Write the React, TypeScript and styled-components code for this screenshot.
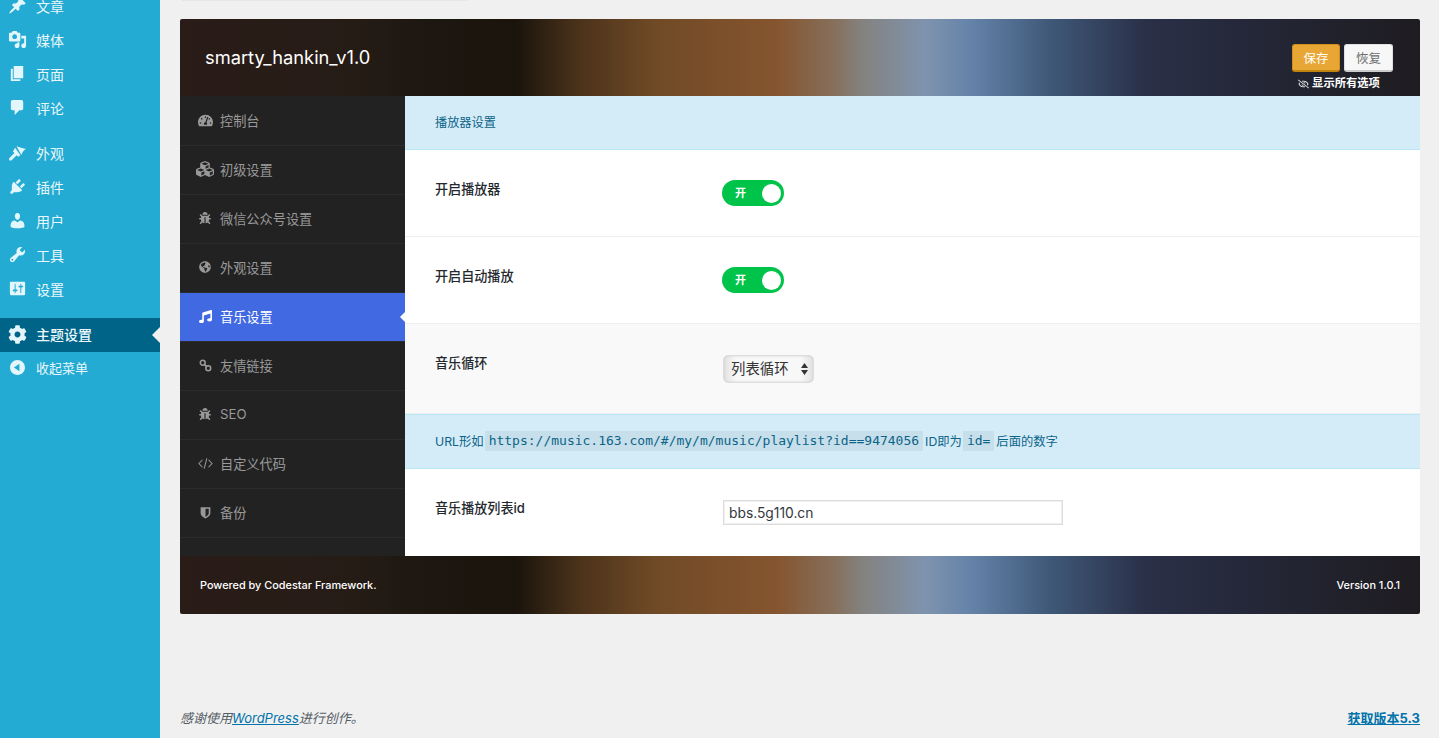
import React from 'react';
import styled, { createGlobalStyle } from 'styled-components';
import {
  FaBug,
  FaCog,
  FaCubes,
  FaGlobeAmericas,
  FaMusic,
  FaRegEyeSlash,
  FaTachometerAlt,
} from 'react-icons/fa';

const SANS = `"Inter", "Noto Sans CJK SC", sans-serif`;

const GlobalStyle = createGlobalStyle`
  html, body {
    margin: 0;
    height: 738px;
    overflow: hidden;
    background: #f0f0f0;
    font-family: ${SANS};
  }
  * { box-sizing: border-box; }
`;

const Page = styled.div`
  display: flex;
  width: 1439px;
  height: 738px;
  overflow: hidden;
`;

const AdminMenu = styled.nav`
  width: 160px;
  height: 738px;
  flex: none;
  background: #23abd3;
  overflow: hidden;
`;

const MenuList = styled.div`
  display: flex;
  flex-direction: column;
  margin-top: -11px;
`;

const MenuItem = styled.div<{ $active?: boolean; $gap?: number; $small?: boolean }>`
  position: relative;
  display: flex;
  align-items: center;
  gap: 9px;
  height: 34px;
  padding: 0 0 ${(p) => (p.$small ? 3 : p.$active ? 2 : 1)}px 8px;
  margin-top: ${(p) => p.$gap ?? 0}px;
  background: ${(p) => (p.$active ? '#006388' : 'transparent')};
  color: #e9f7fb;
  font-size: ${(p) => (p.$small ? 13 : 14)}px;
  font-weight: ${(p) => (p.$active ? 500 : 400)};
  svg {
    width: 19px;
    height: 19px;
    flex: none;
    fill: #e3f6fb;
  }
`;

const MenuArrow = styled.span`
  position: absolute;
  right: 0;
  top: 9px;
  border: 8px solid transparent;
  border-left: 0;
  border-right-color: #f0f0f0;
`;

const Main = styled.main`
  flex: 1;
  display: flex;
  flex-direction: column;
  padding: 0 19px 0 20px;
`;

const TopEdge = styled.div`
  width: 285px;
  height: 1px;
  margin: 0 0 18px 2px;
  background: #e6e6e6;
`;

const Panel = styled.section`
  display: flex;
  flex-direction: column;
  height: 595px;
  border-radius: 2px;
  overflow: hidden;
`;

const banner = `
  background: linear-gradient(
    90deg,
    #2a1c18 0,
    #261c16 170px,
    #1c1710 250px,
    #1a140c 335px,
    #4a321a 398px,
    #704a26 476px,
    #85552f 597px,
    #86705c 655px,
    #84827f 682px,
    #7f93ae 745px,
    #6583a9 790px,
    #3f5878 870px,
    #2a3048 965px,
    #25283a 1060px,
    #1e1c20 1240px
  );
`;

const PanelHeader = styled.header`
  ${banner}
  display: flex;
  align-items: flex-start;
  justify-content: space-between;
  height: 77px;
  flex: none;
  padding: 25px 27px 0 25px;
`;

const Title = styled.h1`
  margin: 2px 0 0;
  color: #fff;
  font-size: 18.3px;
  font-weight: 400;
  line-height: 22px;
`;

const HeaderActions = styled.div`
  display: flex;
  flex-direction: column;
  align-items: center;
`;

const ButtonRow = styled.div`
  display: flex;
  gap: 4px;
`;

const Button = styled.button<{ $primary?: boolean }>`
  width: ${(p) => (p.$primary ? 48 : 49)}px;
  height: 28px;
  padding: 0;
  border: 1px solid ${(p) => (p.$primary ? '#d08f18' : '#e0e0e0')};
  border-bottom: 2px solid ${(p) => (p.$primary ? '#c0840c' : '#cccccc')};
  border-radius: 3px;
  background: ${(p) => (p.$primary ? '#e8a735' : '#f7f7f7')};
  color: ${(p) => (p.$primary ? '#fff' : '#6e6e6e')};
  font-family: ${SANS};
  font-size: 12.5px;
`;

const ShowAll = styled.div`
  display: flex;
  align-items: center;
  gap: 3px;
  margin: 4px 7px 0 0;
  color: #fff;
  font-size: 11.3px;
  font-weight: 700;
  line-height: 15px;
  svg {
    width: 11px;
    height: 10px;
  }
`;

const PanelBody = styled.div`
  display: flex;
  flex: 1;
  min-height: 0;
`;

const SideNav = styled.nav`
  width: 225px;
  flex: none;
  padding-top: 1px;
  background: #222222;
`;

const NavItem = styled.div<{ $active?: boolean }>`
  position: relative;
  display: flex;
  align-items: center;
  height: 49px;
  padding: 0 0 2px 15px;
  border-bottom: 1px solid #2c2c2c;
  background: ${(p) => (p.$active ? '#4169e1' : 'transparent')};
  background-clip: padding-box;
  color: ${(p) => (p.$active ? '#fff' : '#999')};
  font-size: 13.2px;
`;

const NavIcon = styled.span<{ $size: number }>`
  display: flex;
  align-items: center;
  justify-content: center;
  width: 20px;
  margin-right: 5px;
  svg {
    width: ${(p) => p.$size}px;
    height: ${(p) => p.$size}px;
    fill: currentColor;
  }
`;

const NavArrow = styled.span`
  position: absolute;
  right: 0;
  top: 19px;
  border: 5px solid transparent;
  border-left: 0;
  border-right-color: #fff;
`;

const Content = styled.div`
  flex: 1;
  display: flex;
  flex-direction: column;
  background: #fff;
`;

const SectionTitle = styled.div`
  height: 54px;
  padding: 0 0 1px 30px;
  display: flex;
  align-items: center;
  border-bottom: 1px solid #b8e8f5;
  background: #d4ecf8;
  color: #0c6488;
  font-size: 12.2px;
`;

const Row = styled.div<{ $height: number; $muted?: boolean; $last?: boolean }>`
  display: flex;
  height: ${(p) => p.$height}px;
  padding: 30px 0 0 30px;
  border-bottom: ${(p) => (p.$last ? 'none' : '1px solid #eeeeee')};
  background: ${(p) => (p.$muted ? '#f9f9f9' : '#fff')};
`;

const Label = styled.label`
  width: 288px;
  flex: none;
  color: #23282d;
  font-size: 13.1px;
  font-weight: 500;
  line-height: 18px;
`;

const Toggle = styled.div`
  position: relative;
  width: 62px;
  height: 26px;
  margin-left: -1px;
  padding-left: 13px;
  border-radius: 13px;
  background: #00c44a;
  color: #fff;
  font-size: 11px;
  font-weight: 700;
  line-height: 26px;
`;

const Knob = styled.span`
  position: absolute;
  top: 4px;
  right: 3px;
  width: 19px;
  height: 19px;
  border-radius: 50%;
  background: #fff;
`;

const SelectBox = styled.div`
  position: relative;
  width: 91px;
  height: 28px;
  margin-top: 1px;
`;

const Select = styled.select`
  appearance: none;
  width: 100%;
  height: 100%;
  padding: 0 0 1px 7px;
  border: 1px solid #dddddd;
  border-radius: 5px;
  background: linear-gradient(90deg, #e2e2e2 0, #f8f8f8 14%, #f8f8f8 86%, #e2e2e2 100%);
  box-shadow: inset 0 0 2px #c4c4c4;
  color: #333;
  font-family: ${SANS};
  font-size: 14.4px;
`;

const SelectArrows = styled.svg`
  position: absolute;
  right: 6px;
  top: 8px;
  width: 7px;
  height: 12px;
  fill: #333;
  pointer-events: none;
`;

const Notice = styled.div`
  display: flex;
  align-items: center;
  height: 55px;
  padding: 0 0 2px 30px;
  border-top: 1px solid #b8e8f5;
  border-bottom: 1px solid #b8e8f5;
  background: #d4ecf8;
  color: #0c6488;
  font-size: 12.3px;
  white-space: pre;
`;

const Code = styled.code`
  margin: 0 2px 0 1px;
  padding: 2px 4px;
  background: #c6dfea;
  font-family: "DejaVu Sans Mono", monospace;
  font-size: 13px;
  line-height: 16px;
`;

const TextInput = styled.input`
  width: 340px;
  height: 25px;
  margin-top: 1px;
  padding: 0 5px;
  border: 1px solid #dddddd;
  box-shadow: inset 0 0 0 1px #f0f0f0;
  background: #fff;
  color: #32373c;
  font-family: ${SANS};
  font-size: 13.8px;
`;

const PanelFooter = styled.footer`
  ${banner}
  display: flex;
  align-items: center;
  justify-content: space-between;
  height: 58px;
  flex: none;
  padding: 0 20px;
  color: #fff;
  font-size: 10.9px;
  font-weight: 500;
`;

const WpFooter = styled.footer`
  display: flex;
  justify-content: space-between;
  margin-top: 95px;
  color: #555d66;
  font-size: 13px;
  line-height: 18px;
`;

const Thanks = styled.em`
  font-style: italic;
`;

const WpLink = styled.a<{ $bold?: boolean }>`
  color: #0073aa;
  text-decoration: underline;
  font-weight: ${(p) => (p.$bold ? 700 : 400)};
`;

const Dash = ({ d }: { d: string }) => (
  <svg viewBox="0 0 20 20">
    <path d={d} />
  </svg>
);

const ChainIcon = () => (
  <svg viewBox="0 0 16 16" style={{ fill: 'none' }}>
    <circle cx="4.6" cy="4.6" r="3" stroke="currentColor" strokeWidth="1.9" />
    <circle cx="11.4" cy="11.4" r="3" stroke="currentColor" strokeWidth="1.9" />
    <path d="M6 6l4 4" stroke="currentColor" strokeWidth="1.9" />
  </svg>
);

const CodeIcon = () => (
  <svg viewBox="0 0 16 16" style={{ fill: 'none' }}>
    <path d="M4.8 4L1 8l3.8 4M11.2 4L15 8l-3.8 4M9.4 2.5L6.6 13.5" stroke="currentColor" strokeWidth="1.1" />
  </svg>
);

const ShieldIcon = () => (
  <svg viewBox="0 0 16 16">
    <path
      fillRule="evenodd"
      d="M2 1.5h12v7.5c0 3-3 5-6 6.5C5 14 2 12 2 9zM8 3.5v10c2.2-1.2 4-2.8 4-4.5V3.5z"
    />
  </svg>
);

const menuTop: { label: string; d: string; gap?: number }[] = [
  {
    label: '文章',
    d: 'M10.44 3.02l1.82-1.82 6.36 6.35-1.83 1.82c-1.05-.68-2.48-.57-3.41.36l-.75.75c-.92.93-1.04 2.35-.35 3.41l-1.83 1.82-2.41-2.41-2.8 2.79c-.42.42-3.38 2.71-3.8 2.29s1.86-3.39 2.28-3.81l2.79-2.79L4.1 9.36l1.83-1.82c1.05.69 2.48.57 3.4-.36l.75-.75c.93-.92 1.05-2.35.36-3.41z',
  },
  {
    label: '媒体',
    d: 'M13 11V4c0-.55-.45-1-1-1h-1.67L9 1H5L3.67 3H2c-.55 0-1 .45-1 1v7c0 .55.45 1 1 1h10c.55 0 1-.45 1-1zM7 4.5c1.38 0 2.5 1.12 2.5 2.5S8.38 9.5 7 9.5 4.5 8.38 4.5 7 5.62 4.5 7 4.5zM14 6h5v10.5c0 1.38-1.12 2.5-2.5 2.5S14 17.88 14 16.5s1.12-2.5 2.5-2.5c.17 0 .34.02.5.05V9h-3V6zm-4 8.05V13h2v3.5c0 1.38-1.12 2.5-2.5 2.5S7 17.88 7 16.5 8.12 14 9.5 14c.17 0 .34.02.5.05z',
  },
  { label: '页面', d: 'M6 15V2h10v13H6zm-1 1h8v2H3V5h2v11z' },
  {
    label: '评论',
    d: 'M5 2h9c1.1 0 2 .9 2 2v7c0 1.1-.9 2-2 2h-2l-5 5v-5H5c-1.1 0-2-.9-2-2V4c0-1.1.9-2 2-2z',
  },
  {
    label: '外观',
    gap: 11,
    d: 'M9 3.5c3 1 6.5 2 10 2.7-2 .8-3.7 2.5-5 6.3zM7.5 5l5.5 8-2.3 1.5-1.6-1.6-5 5c-.8.8-2 .8-2.6.2s-.5-1.7.3-2.5l5-5-1.6-1.7z',
  },
  {
    label: '插件',
    d: 'M13.11 4.36L9.87 7.6 8 5.73l3.24-3.24c.35-.34 1.05-.2 1.56.32.52.51.66 1.21.31 1.55zm-8 1.77l.91-1.12 9.01 9.01-1.19.84c-.71.71-2.63 1.16-3.82 1.16H6.14L4.9 17.26c-.59.59-1.54.59-2.12 0-.59-.58-.59-1.53 0-2.12l1.24-1.24v-3.88c0-1.13.4-3.19 1.09-3.89zm7.26 3.97l3.24-3.24c.34-.35 1.04-.21 1.55.31.52.51.66 1.21.31 1.55l-3.24 3.25z',
  },
  {
    label: '用户',
    d: 'M10 9.25c-2.27 0-2.73-3.44-2.73-3.44C7 4.02 7.82 2 9.97 2c2.16 0 2.98 2.02 2.71 3.81 0 0-.41 3.44-2.68 3.44zm0 2.57L12.72 10c2.39 0 4.52 2.33 4.52 4.53v2.49s-3.65 1.13-7.24 1.13c-3.65 0-7.24-1.13-7.24-1.13v-2.49c0-2.25 1.94-4.48 4.47-4.48z',
  },
  {
    label: '工具',
    d: 'M16.68 9.77c-1.34 1.34-3.3 1.67-4.95.99l-5.41 6.52c-.99.99-2.59.99-3.58 0s-.99-2.59 0-3.57l6.52-5.42c-.68-1.65-.35-3.61.99-4.95 1.28-1.28 3.12-1.62 4.72-1.06l-2.89 2.89 2.82 2.82 2.86-2.87c.53 1.58.18 3.39-1.08 4.65zM3.81 16.21c.4.39 1.04.39 1.43 0 .4-.4.4-1.04 0-1.43-.39-.4-1.03-.4-1.43 0-.39.39-.39 1.03 0 1.43z',
  },
  {
    label: '设置',
    d: 'M18 16V4c0-.55-.45-1-1-1H3c-.55 0-1 .45-1 1v12c0 .55.45 1 1 1h14c.55 0 1-.45 1-1zM8 11h1c.55 0 1 .45 1 1s-.45 1-1 1H8v1.5c0 .28-.22.5-.5.5s-.5-.22-.5-.5V13H6c-.55 0-1-.45-1-1s.45-1 1-1h1V5.5c0-.28.22-.5.5-.5s.5.22.5.5V11zm5-2h-1c-.55 0-1-.45-1-1s.45-1 1-1h1V5.5c0-.28.22-.5.5-.5s.5.22.5.5V7h1c.55 0 1 .45 1 1s-.45 1-1 1h-1v5.5c0 .28-.22.5-.5.5s-.5-.22-.5-.5V9z',
  },
];

const navItems = [
  { label: '控制台', size: 15, icon: <FaTachometerAlt /> },
  { label: '初级设置', size: 18, icon: <FaCubes /> },
  { label: '微信公众号设置', size: 12, icon: <FaBug /> },
  { label: '外观设置', size: 12, icon: <FaGlobeAmericas /> },
  { label: '音乐设置', size: 13, icon: <FaMusic />, active: true },
  { label: '友情链接', size: 13, icon: <ChainIcon /> },
  { label: 'SEO', size: 12, icon: <FaBug /> },
  { label: '自定义代码', size: 15, icon: <CodeIcon /> },
  { label: '备份', size: 13, icon: <ShieldIcon /> },
];

export default function App() {
  return (
    <Page>
      <GlobalStyle />
      <AdminMenu>
        <MenuList>
          {menuTop.map((m) => (
            <MenuItem key={m.label} $gap={m.gap}>
              <Dash d={m.d} />
              {m.label}
            </MenuItem>
          ))}
          <MenuItem $active $gap={12}>
            <FaCog />
            主题设置
            <MenuArrow />
          </MenuItem>
          <MenuItem $small>
            <Dash d="M10 2.16c4.33 0 7.84 3.51 7.84 7.84s-3.51 7.84-7.84 7.84S2.16 14.33 2.16 10 5.71 2.16 10 2.16zm2 11.72V6.12L6.18 9.97z" />
            收起菜单
          </MenuItem>
        </MenuList>
      </AdminMenu>
      <Main>
        <TopEdge />
        <Panel>
          <PanelHeader>
            <Title>smarty_hankin_v1.0</Title>
            <HeaderActions>
              <ButtonRow>
                <Button $primary>保存</Button>
                <Button>恢复</Button>
              </ButtonRow>
              <ShowAll>
                <FaRegEyeSlash />
                显示所有选项
              </ShowAll>
            </HeaderActions>
          </PanelHeader>
          <PanelBody>
            <SideNav>
              {navItems.map((n) => (
                <NavItem key={n.label} $active={n.active}>
                  <NavIcon $size={n.size}>{n.icon}</NavIcon>
                  {n.label}
                  {n.active && <NavArrow />}
                </NavItem>
              ))}
            </SideNav>
            <Content>
              <SectionTitle>播放器设置</SectionTitle>
              <Row $height={87}>
                <Label>开启播放器</Label>
                <Toggle>
                  开
                  <Knob />
                </Toggle>
              </Row>
              <Row $height={87}>
                <Label>开启自动播放</Label>
                <Toggle>
                  开
                  <Knob />
                </Toggle>
              </Row>
              <Row $height={90} $muted>
                <Label>音乐循环</Label>
                <SelectBox>
                  <Select defaultValue="list">
                    <option value="list">列表循环</option>
                    <option value="single">单曲循环</option>
                  </Select>
                  <SelectArrows viewBox="0 0 7 12">
                    <path d="M3.5 0L7 5H0zM3.5 12L0 7h7z" />
                  </SelectArrows>
                </SelectBox>
              </Row>
              <Notice>
                URL形如
                <Code>https://music.163.com/#/my/m/music/playlist?id==9474056</Code>
                ID即为
                <Code>id=</Code>
                后面的数字
              </Notice>
              <Row $height={87} $last>
                <Label>音乐播放列表id</Label>
                <TextInput defaultValue="bbs.5g110.cn" />
              </Row>
            </Content>
          </PanelBody>
          <PanelFooter>
            <span>Powered by Codestar Framework.</span>
            <span>Version 1.0.1</span>
          </PanelFooter>
        </Panel>
        <WpFooter>
          <Thanks>
            感谢使用<WpLink href="#">WordPress</WpLink>进行创作。
          </Thanks>
          <WpLink href="#" $bold>
            获取版本5.3
          </WpLink>
        </WpFooter>
      </Main>
    </Page>
  );
}
